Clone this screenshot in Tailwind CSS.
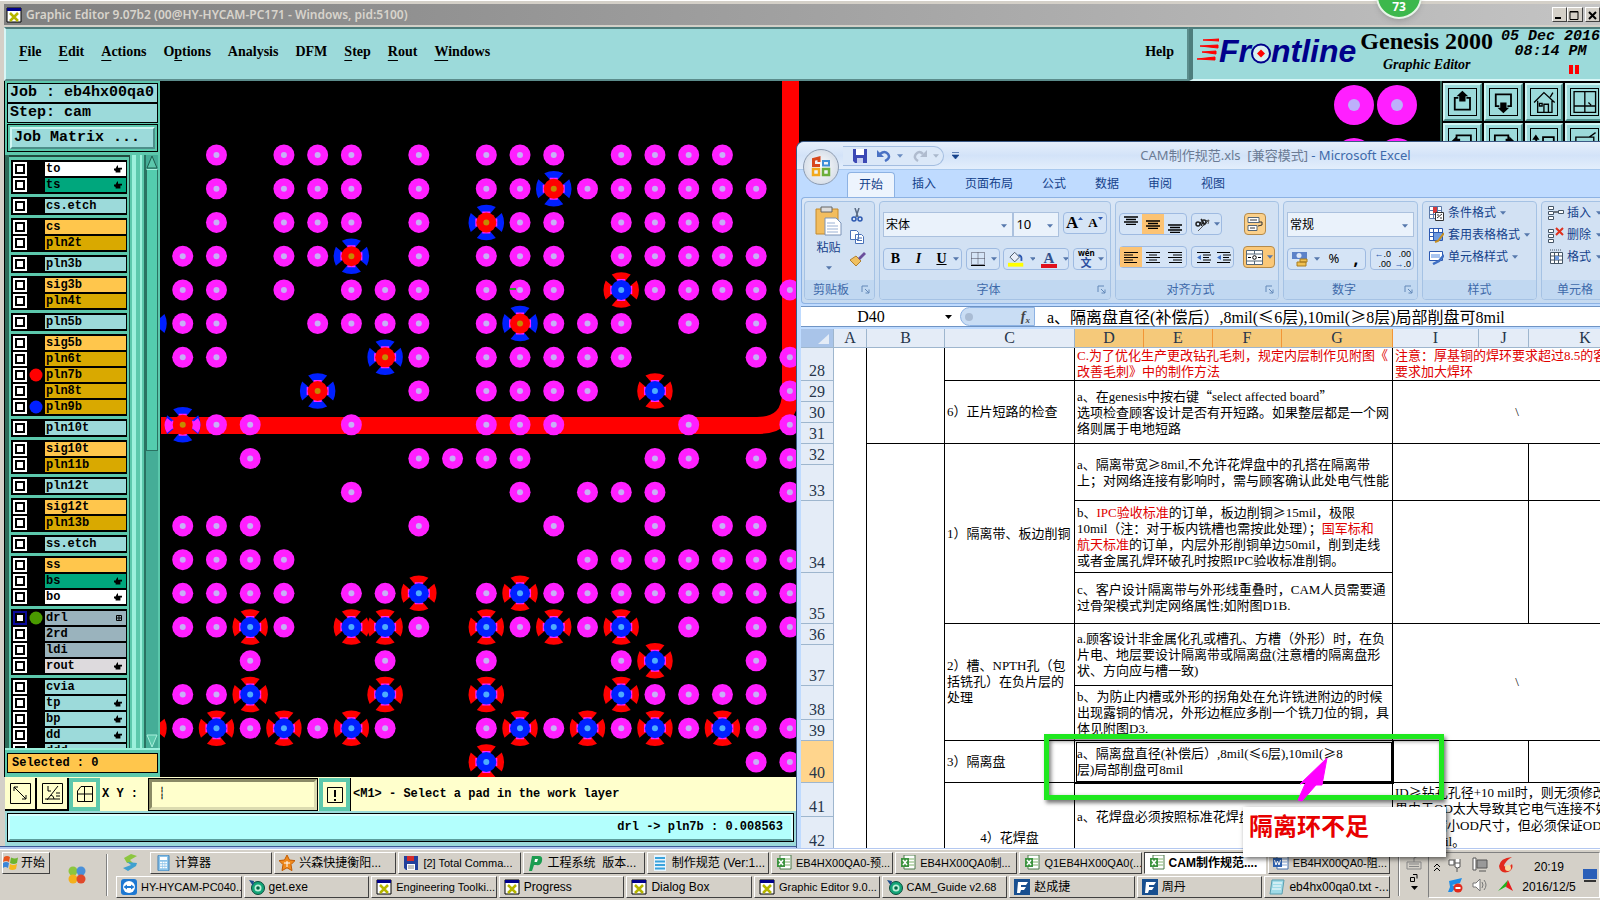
<!DOCTYPE html>
<html lang="zh-CN">
  <head>
    <meta charset="UTF-8" />
    <meta name="viewport" content="width=device-width, initial-scale=1.0" />
    <title>Graphic Editor 9.07b2</title>
    <script src="https://cdn.jsdelivr.net/npm/@tailwindcss/browser@4"></script>
  </head>
  <body
    class="h-screen flex flex-col overflow-hidden relative bg-[#d4d0c8] text-black text-xs font-['Liberation_Sans','Noto_Sans_CJK_SC',sans-serif]"
  >
    <!-- shared icons -->
    <svg class="hidden">
      <symbol id="dn" viewBox="0 0 7 4"><path d="M0 0h7L3.500 4z" fill="currentColor" /></symbol>
      <symbol id="hand" viewBox="0 0 10 9"><path d="M4 0l1 0 0 3 5 0 0 2-2 0 0 4-6 0 0-2-2-1 0-2 2 0z" fill="#000" /></symbol>
      <symbol id="gridmark" viewBox="0 0 6 6"><path d="M.5.5h5v5h-5zM3 0v6M0 3h6" fill="none" stroke="#000" /></symbol>
      <symbol id="launcher" viewBox="0 0 9 9"><path d="M1 7V1h6M4 4l4 4M8 4.500V8H4.500" fill="none" stroke="#6288b8" /></symbol>
      <symbol id="xwin" viewBox="0 0 16 16">
        <path d="M1 1h14v14H1z" fill="#fff" stroke="#000" />
        <path d="M1 1h14v3H1z" fill="#00008b" />
        <path d="M4 6l8 8M12 6l-8 8" stroke="#b5b500" stroke-width="2.500" />
      </symbol>
      <symbol id="calc" viewBox="0 0 16 16">
        <rect x="3" y="0" width="11" height="16" rx="1" fill="#8cc4ea" stroke="#3c7fb5" />
        <path d="M5 2h7v3H5z" fill="#fff" />
        <path d="M5 7.500h7M5 10h7M5 12.500h7" stroke="#fff" stroke-width="1.500" stroke-dasharray="2 .6" />
      </symbol>
      <symbol id="star" viewBox="0 0 16 16">
        <path d="M8 0l2.500 5 5.500.6-4 4 1 6-5-2.800L3 15.600l1-6-4-4L5.500 5z" fill="#f08a1c" stroke="#c25b00" />
        <path d="M5 8h6M8 6v6" stroke="#fff" />
      </symbol>
      <symbol id="disk" viewBox="0 0 16 16">
        <path d="M1 1h14v14H3l-2-2z" fill="#22409c" />
        <path d="M4 1h7v5H4z" fill="#d52b2b" />
        <path d="M4 9h8v6H4z" fill="#fff" />
        <path d="M5 11h6M5 13h6" stroke="#888" />
      </symbol>
      <symbol id="pee" viewBox="0 0 16 16">
        <path d="M4 1h7q4 0 3 5t-6 4H6l-2 6H1z" fill="#1c9c50" />
        <path d="M7 4h3l-1 3H6.500z" fill="#fff" />
      </symbol>
      <symbol id="doc" viewBox="0 0 16 16">
        <path d="M2 0h12v16H2z" fill="#e8f4fc" />
        <path d="M3 3h10M3 6.500h10M3 10h10M3 13.500h10" stroke="#3aa3dc" stroke-width="2" />
      </symbol>
      <symbol id="xls" viewBox="0 0 16 16">
        <path d="M4 0h11v14H4z" fill="#fff" stroke="#4d7a4a" />
        <path d="M8 4h6M8 7h6M8 10h6" stroke="#7fb26a" />
        <path d="M1 3h8v9H1z" fill="#3d9440" />
        <path d="M3 5l4 5M7 5l-4 5" stroke="#fff" stroke-width="1.500" />
      </symbol>
      <symbol id="word" viewBox="0 0 16 16">
        <path d="M4 0h11v14H4z" fill="#fff" stroke="#456fa8" />
        <path d="M8 4h6M8 7h6M8 10h6" stroke="#86a8d8" />
        <path d="M0 3h9v9H0z" fill="#2f61ae" />
        <path d="M1.500 5l1.500 5 1.500-4L6 10l1.500-5" stroke="#fff" fill="none" />
      </symbol>
      <symbol id="viewer" viewBox="0 0 16 16">
        <rect width="16" height="16" rx="3" fill="#1d78d2" />
        <circle cx="8" cy="8" r="6" fill="#fff" />
        <path d="M2.500 8l3.500-2.500v1.500h4V5.500L13.500 8 10 10.500V9H6v1.500z" fill="#1d78d2" />
      </symbol>
      <symbol id="eye" viewBox="0 0 16 16">
        <circle cx="9" cy="9" r="6.500" fill="#15a578" stroke="#0a4d3b" />
        <circle cx="9" cy="9" r="3.500" fill="#bdf0d8" />
        <circle cx="9" cy="9" r="1.800" fill="#064" />
        <path d="M0 1l5 1-1 5z" fill="#1b4e8c" />
      </symbol>
      <symbol id="feiq" viewBox="0 0 16 16">
        <path d="M0 0h16v16H0z" fill="#184f8f" />
        <path d="M4 3h10l-2 3H7v2h5l-2 3H7l-1 3H3z" fill="#fff" />
      </symbol>
      <symbol id="note" viewBox="0 0 16 16">
        <path d="M3 1h12l-2 14H1z" fill="#9fdbe8" stroke="#5a9fb0" />
        <path d="M4 4h9M4 7h8M3 10h9" stroke="#fff" />
      </symbol>
      <symbol id="al-l" viewBox="0 0 14 11"><path d="M0 .5h14M0 3h9M0 5.500h14M0 8h9M0 10.500h13" stroke="#000" stroke-width="1.200" /></symbol>
      <symbol id="al-c" viewBox="0 0 14 11"><path d="M0 .5h14M3 3h8M0 5.500h14M3 8h8M0 10.500h14" stroke="#000" stroke-width="1.200" /></symbol>
      <symbol id="al-r" viewBox="0 0 14 11"><path d="M0 .5h14M5 3h9M0 5.500h14M5 8h9M1 10.500h13" stroke="#000" stroke-width="1.200" /></symbol>
      <symbol id="al-v" viewBox="0 0 14 9"><path d="M0 1h14M2 3.500h10M0 6h14M2 8.500h10" stroke="#000" stroke-width="1.300" /></symbol>
      <symbol id="indent" viewBox="0 0 15 11">
        <path d="M1 .5h13M7 3h8M7 5.500h6M7 8h8M1 10.500h13" stroke="#000" stroke-width="1.200" />
        <path d="M5 3v5L1 5.500z" fill="#3f6fc4" />
      </symbol>
    </svg>

    <!-- Genesis window -->
    <div class="flex-1 min-h-0 flex flex-col pl-1 border-t border-white">
      <header
        class="h-[23px] shrink-0 mt-[3px] pl-0.5 flex items-center gap-1 bg-linear-to-r from-[#808080] to-[#c4c4c4] border-b-2 border-[#d4d0c8]"
      >
        <svg class="size-4"><use href="#xwin" /></svg>
        <span class="flex-1 font-semibold text-[12px] font-['Noto_Sans'] text-[#d8d4cc]"
          >Graphic Editor 9.07b2 (00@HY-HYCAM-PC171 - Windows, pid:5100)</span
        >
        <div class="flex w-[48px] h-[15px]">
          <button aria-label="Minimize" class="w-4 bg-[#d4d0c8] border border-t-white border-l-white border-[#404040]">
            <svg class="size-3"><path d="M2 9h6" stroke="#000" stroke-width="2" /></svg>
          </button>
          <button aria-label="Maximize" class="w-4 mr-0.5 bg-[#d4d0c8] border border-t-white border-l-white border-[#404040]">
            <svg class="size-3"><path d="M2 2.500h8v8H2zM2 3h8" fill="none" stroke="#000" /></svg>
          </button>
          <button aria-label="Close" class="w-4 bg-[#d4d0c8] border border-t-white border-l-white border-[#404040]">
            <svg class="size-3"><path d="M3 3l7 7M10 3l-7 7" stroke="#000" stroke-width="2" /></svg>
          </button>
        </div>
      </header>

      <div class="h-[54px] shrink-0 flex bg-[#9cdada] font-bold">
        <nav
          class="flex-1 flex items-center gap-[17px] pl-[13px] pr-[13px] pb-1 text-[14px] font-['Liberation_Serif'] border-2 border-t-[#4d7d7c] border-l-[#d8f6f6] border-[#5c8d8c]"
        >
          <a href="#"><u class="underline-offset-4">F</u>ile</a>
          <a href="#"><u class="underline-offset-4">E</u>dit</a>
          <a href="#"><u class="underline-offset-4">A</u>ctions</a>
          <a href="#">O<u class="underline-offset-4">p</u>tions</a>
          <a href="#">Analysis</a>
          <a href="#">DFM</a>
          <a href="#"><u class="underline-offset-4">S</u>tep</a>
          <a href="#"><u class="underline-offset-4">R</u>out</a>
          <a href="#"><u class="underline-offset-4">W</u>indows</a>
          <a href="#" class="ml-auto">Help</a>
        </nav>
        <div class="w-[411px] flex items-start overflow-hidden whitespace-nowrap border-t-2 border-b-2 border-l-4 border-t-[#4d7d7c] border-b-[#d8f6f6] border-l-[#4d7d7c]">
          <div class="flex items-baseline pt-0.5 pl-1 italic text-[32px] leading-10 text-[#00008b]">
            <svg class="w-[22px] h-6" viewBox="0 0 22 24">
              <path d="M6 2l16-1v2zM3 8l18-1v3zM5 14l14-1v3zM0 21l18-2v3z" fill="#f00" stroke="#f00" />
            </svg>
            Fr<svg class="w-5 h-[21px] translate-y-0.5" viewBox="0 0 20 21"
              ><circle cx="10" cy="10.500" r="9" fill="#d8f0f0" stroke="#00008b" stroke-width="2" /><path d="M10 6.500l4 4-4 4-4-4z" fill="#f00" /></svg
            >ntline
          </div>
          <div class="pl-1 text-center font-['Liberation_Serif']">
            <p class="text-[24px] leading-6">Genesis 2000</p>
            <p class="text-[14px] leading-6 italic">Graphic Editor</p>
          </div>
          <div class="pl-2 text-center italic text-[15px] leading-[15px] font-['Liberation_Mono']">
            <p>05 Dec 2016</p>
            <p>08:14 PM</p>
            <svg class="w-[10px] h-[9px] ml-[68px] mt-1.5"><path d="M0 0h4v9H0zM6 0h4v9H6z" fill="#f00" /></svg>
          </div>
        </div>
      </div>

      <div class="flex-1 min-h-0 flex">
        <!-- layers -->
        <aside class="w-[156px] shrink-0 flex flex-col bg-[#5cc8ac] border-l border-black font-bold font-['Liberation_Mono']">
          <div class="mx-0.5 mt-0.5 text-[15px] leading-[17px] whitespace-nowrap">
            <p class="h-5 pl-0.5 bg-[#9cdada] border border-black">Job : eb4hx00qa0</p>
            <p class="h-5 pl-0.5 bg-[#9cdada] border border-black">Step: cam</p>
          </div>
          <div class="mx-0.5 mt-px p-0.5 border border-black bg-[#5cc8ac]">
            <button class="block w-full h-[22px] pl-0.5 text-left text-[15px] leading-4 bg-[#9cdada] border-2 border-t-[#d0f5f2] border-l-[#d0f5f2] border-[#4d8f8a]">
              Job Matrix ...
            </button>
          </div>
          <div class="flex-1 min-h-0 mt-[3px] flex border-b-2 border-[#9cf0dc]">
            <div class="w-1 bg-[#2f6b5a]"></div>
            <div id="layers" class="w-[121px] pt-[3px] px-0.5 flex flex-col gap-[3px] overflow-hidden border-t-2 border-r border-[#204a3f]"></div>
            <div class="flex-1 border-l-4 border-r-2 border-[#9cf0dc] mx-0.5"></div>
            <div class="w-[14px] mr-0.5 flex flex-col bg-[#45ad97] border-l-2 border-[#2a7262]">
              <svg class="h-[14px] w-3" viewBox="0 0 12 14"><path d="M6 1l5 12H1z" fill="#5cc8ac" stroke="#205c4e" /></svg>
              <div class="h-[282px] bg-[#54ccae] border border-t-[#a8f0dc] border-[#2a7262]"></div>
              <svg class="h-[14px] w-3 mt-auto" viewBox="0 0 12 14"><path d="M6 13L1 1h10z" fill="#5cc8ac" stroke="#a8f0dc" /></svg>
            </div>
          </div>
          <p class="mx-0.5 mt-[3px] mb-1 h-5 pl-1 leading-[18px] bg-[#ffc64c] border border-black">Selected : 0</p>
        </aside>

        <!-- work canvas -->
        <main class="flex-1 relative bg-black overflow-hidden">
          <svg class="block w-full h-full">
            <defs>
              <g id="wings">
                <g id="wing2"><path d="M-9.500-15.500Q0-20 9.500-15.500L4-9H-4zM-9.500 15.500Q0 20 9.500 15.500L4 9H-4z" /></g>
                <use href="#wing2" transform="rotate(90)" />
              </g>
              <g id="p">
                <circle r="10.500" fill="#ff1fff" />
                <circle r="3" fill="#c8aef6" />
              </g>
              <g id="b">
                <use href="#wings" fill="#0020ff" />
                <path d="M-4-10h8M-4 10h8M-10-4v8M10-4v8" stroke="#ff1fff" stroke-width="2" />
                <circle r="10" fill="#f00" />
                <circle r="3" fill="#c58a00" />
              </g>
              <g id="r">
                <use href="#wings" fill="#f00" />
                <path d="M-4-10h8M-4 10h8M-10-4v8M10-4v8" stroke="#ff1fff" stroke-width="2" />
                <circle r="10" fill="#0020ff" />
                <circle r="3" fill="#4cacff" />
              </g>
            </defs>
            <g transform="translate(-160 -81)">
              <path d="M161 425.500H757Q790.500 425.500 790.500 392V81" fill="none" stroke="#f00" stroke-width="17" />
              <g id="pads"></g>
              <path d="M510 289h6" stroke="#2a2" stroke-width="2" />
              <!-- spokes of this pad lie on the track -->
              <path d="M167 418q-5 7 0 15l5-4v-7zM198 418q5 7 0 15l-5-4v-7z" fill="#ff1fff" />
              <g fill="#ff1fff">
                <circle cx="1354" cy="105" r="20" /><circle cx="1397" cy="105" r="20" />
                <circle cx="1354" cy="158" r="20" /><circle cx="1397" cy="158" r="20" />
              </g>
              <g fill="#bdb0fb">
                <circle cx="1354" cy="105" r="6" /><circle cx="1397" cy="105" r="6" />
              </g>
            </g>
          </svg>
        </main>

        <!-- view tools -->
        <div class="w-[160px] shrink-0 overflow-hidden border-l-2 border-[#2f5f50] bg-black">
          <div id="tools" class="w-[162px] pt-0.5 pl-px grid grid-cols-4 gap-0.5"></div>
        </div>
      </div>

      <!-- command line -->
      <form class="h-[34px] shrink-0 flex bg-[#ffffcc] border-t border-[#ffffcc] font-bold font-['Liberation_Mono'] ml-px">
        <button type="button" aria-label="Snap" class="w-8 flex items-center justify-center border-r-2 border-b-2 border-black">
          <svg class="size-[23px]"><path d="M1.500 1.500h20v20h-20zM5 9V5h4M5 5l12 12M17 13v4h-4" fill="none" stroke="#000" /></svg>
        </button>
        <button type="button" aria-label="Angle" class="w-8 flex items-center justify-center border-r-2 border-b-2 border-black">
          <svg class="size-[23px]"><path d="M1.500 1.500h20v20h-20zM4 17h15M6 18L17 4M7 4v5h3M10 13q3 1 3 4M15 11h4M15 14h4" fill="none" stroke="#000" /></svg>
        </button>
        <button type="button" aria-label="Grid" class="w-[31px] flex items-center justify-center border-4 border-[#5cc8ac]">
          <svg class="size-[19px]"><path d="M6 1.500h11.500v15h-15V6zM2 9h16M9.500 2v15" fill="none" stroke="#000" /></svg>
        </button>
        <label for="xy" class="w-12 pl-0.5 leading-8">X Y :</label>
        <input
          id="xy"
          placeholder="┊"
          class="w-[168px] m-px pl-1 bg-[#ffffcc] placeholder:text-black border-3 border-t-[#8a8a66] border-l-[#8a8a66] border-[#dcdcb0] outline-1 outline-black"
        />
        <button type="button" aria-label="Alert" class="w-[31px] ml-px flex items-center justify-center border-4 border-[#5cc8ac]">
          <svg class="size-[18px]"><path d="M1.500 1.500h15v15h-15z" fill="none" stroke="#000" /><path d="M9 4v7M9 13v2" stroke="#000" stroke-width="2" /></svg>
        </button>
        <p class="pl-0.5 border-l border-black leading-8">&lt;M1&gt; - Select a pad in the work layer</p>
      </form>
      <div class="h-[35px] shrink-0 p-[3px] bg-[#9cdada] ml-px">
        <p class="h-[27px] w-[785px] pr-2 text-right leading-[22px] font-bold font-['Liberation_Mono'] bg-[#b3fffd] border-2 border-[#d8ffff] border-b-[#5c9d9c] outline-1 outline-black">
          drl -&gt; pln7b : 0.008563
        </p>
      </div>
      <div class="h-[3px] shrink-0 bg-[#b4c8f0] border-t border-[#3c5a96] -ml-1"></div>
    </div>

    <!-- taskbar -->
    <footer class="h-[51px] shrink-0 flex bg-[#d4d0c8] border-t border-white py-0.5 whitespace-nowrap">
      <button class="ml-0.5 w-12 h-[22px] flex items-center gap-0.5 border border-t-white border-l-white border-[#404040]">
        <svg class="size-4 shrink-0" viewBox="0 0 16 16">
          <path d="M1 2q3-2 6 0L6 7q-3-2-6 0z" fill="#e8541c" /><path d="M8 2.500q4 2 7 0L14 8q-3 2-7 0z" fill="#6cb52d" />
          <path d="M0 8q3-2 6 0l-1 5q-3-2-5 0z" fill="#3a86d8" /><path d="M7 9q3 2 7 0l-1 5q-4 2-7 0z" fill="#f5b81c" />
        </svg>
        开始
      </button>
      <svg class="size-[18px] ml-[18px] mt-3.5" viewBox="0 0 18 18">
        <circle cx="5" cy="5" r="4.500" fill="#8cc63f" /><circle cx="13" cy="5" r="4.500" fill="#4a90d9" />
        <circle cx="5" cy="13" r="4.500" fill="#f3b01c" /><circle cx="13" cy="13" r="4.500" fill="#e0492c" />
      </svg>
      <div class="w-0.5 my-0.5 ml-5 border-l border-[#808080] bg-white"></div>
      <nav class="flex-1 ml-2 flex flex-col gap-0.5 min-w-0">
        <div class="flex gap-3">
          <svg class="w-4 h-[18px] mt-0.5 ml-1.5 shrink-0" viewBox="0 0 16 18">
            <path d="M2 4l7-4 6 2-7 4 3 3H5z" fill="#8cc63f" /><path d="M5 8l10 1-1 3-8 5-5-3 8-3z" fill="#3fa0d0" />
          </svg>
          <div id="tasks1" class="flex-1 min-w-0 grid grid-cols-10 gap-0.5"></div>
        </div>
        <div id="tasks2" class="grid grid-cols-10 gap-0.5"></div>
      </nav>
      <div class="w-0.5 my-0.5 ml-2 border-l border-[#808080] bg-white"></div>
      <div class="w-[28px] pt-0.5 flex flex-col items-center gap-1">
        <svg class="w-4 h-4" viewBox="0 0 16 16"><path d="M1 8h14v7H1zM3 10h10M3 12.500h10M8 8V4l6-3" fill="none" stroke="#888" /></svg>
        <svg class="w-2 h-2"><path d="M3 .5h4v4M.5 3.500h4v4h-4z" fill="none" stroke="#000" /></svg>
        <svg class="w-[7px] h-1"><use href="#dn" /></svg>
      </div>
      <div class="w-[172px] flex gap-1.5 border border-t-[#808080] border-l-[#808080] border-white pl-1">
        <svg class="w-2 h-2 mt-2.5 shrink-0"><path d="M1 4l3-3 3 3M1 8l3-3 3 3" fill="none" stroke="#000" /></svg>
        <div class="grid grid-cols-3 gap-x-2 gap-y-1 py-1 w-[68px]">
          <svg class="size-4" viewBox="0 0 16 16"><path d="M2 3h5v5H2zM8 2v4h5V2M8 6v4q2 2 5 0V6M10 11v4" fill="#fff" stroke="#555" /></svg>
          <svg class="size-4" viewBox="0 0 16 16"><path d="M5 3h10v8H5zM7 14h7" fill="#999" stroke="#555" /><path d="M1 1h3v12H1z" fill="#fff" stroke="#555" /></svg>
          <svg class="size-4" viewBox="0 0 16 16"><path d="M14 0Q2 1 1 9q1 8 9 6 6-3 4-8l-4 4-4-2q1-5 8-9z" fill="#e22a1c" /><circle cx="10" cy="11" r="3" fill="#f7d9a0" /></svg>
          <svg class="size-4" viewBox="0 0 16 16"><path d="M2 4L15 1l-2 5-8 2 4 2-4 5H1l2-5z" fill="#1c8ce8" /><circle cx="11" cy="11" r="4.500" fill="#e22a1c" /><path d="M8.500 11h5" stroke="#fff" stroke-width="2" /></svg>
          <svg class="size-4" viewBox="0 0 16 16"><path d="M1 6h3l4-4v12l-4-4H1z" fill="#fff" stroke="#777" /><path d="M10 5q2 3 0 6M12 3q4 5 0 10" fill="none" stroke="#777" /></svg>
          <svg class="size-4" viewBox="0 0 16 16"><path d="M0 14L10 3 9 9z" fill="#1fb41f" /><path d="M10 3l5 11-7-4z" fill="#e81c1c" /></svg>
        </div>
        <div class="w-[56px] text-center leading-5 pt-1">
          <p>20:19</p>
          <p>2016/12/5</p>
        </div>
        <svg class="w-3.5 h-3.5 mt-4" viewBox="0 0 14 14"><path d="M0 0h14v10H0z" fill="#2b5fb8" /><path d="M1 12h12" stroke="#333" stroke-width="2" /></svg>
      </div>
    </footer>

    <!-- Excel window -->
    <section
      class="absolute left-[796px] right-0 top-[141px] bottom-[52px] flex flex-col overflow-hidden rounded-tl-lg bg-[#bfdbff] border-l border-t border-[#3c5a86] text-[#15428b] font-['Noto_Sans','Noto_Sans_CJK_SC',sans-serif]"
    >
      <button aria-label="Office" class="absolute left-1.5 top-[7px] size-9 rounded-full border border-[#8c9bb0] bg-radial from-white to-[#c9d3e0] flex items-center justify-center">
        <svg class="size-[22px]" viewBox="0 0 22 22" fill="none" stroke-width="3">
          <path d="M10 9.500H3.500V3.500L9 2v4" stroke="#d8481c" /><path d="M13 9.500h6V5h-6z" stroke="#3f8fd8" stroke-width="2" />
          <path d="M3 13h6v6H3z" stroke="#f2a91c" stroke-width="2.500" /><path d="M13 13h6v6h-6z" stroke="#6cae3a" stroke-width="2.500" />
        </svg>
      </button>
      <div class="h-7 shrink-0 pl-[46px] flex items-center bg-linear-to-b from-[#e6effb] via-[#d3e3f8] to-[#e3eefc] border-b border-[#a9c9ee]">
        <div class="w-[101px] h-5 pl-2.5 flex items-center gap-1.5 rounded-r-full border border-l-0 border-[#a3bde0] bg-[#dbe8f8]">
          <svg class="size-3.5 shrink-0" viewBox="0 0 14 14"><path d="M0 0h14v14H2l-2-2z" fill="#3c49b4" /><path d="M3 0h8v6H3z" fill="#fff" /><path d="M4 9h6v5H4z" fill="#c8d0f0" /></svg>
          <svg class="w-3.5 h-3 ml-1 shrink-0" viewBox="0 0 14 12"><path d="M3 4q5-4 8 0t-3 7" fill="none" stroke="#4a72c4" stroke-width="2.500" /><path d="M0 0v7h7z" fill="#4a72c4" /></svg>
          <svg class="w-1.5 h-1 shrink-0 text-[#6a8cc0]"><use href="#dn" /></svg>
          <svg class="w-3.5 h-3 ml-1 shrink-0" viewBox="0 0 14 12"><path d="M10 4Q6 0 3 4t2 7" fill="none" stroke="#b0bccf" stroke-width="2.500" /><path d="M14 0v7H7z" fill="#b0bccf" /></svg>
          <svg class="w-1.5 h-1 shrink-0 text-[#aab8cc]"><use href="#dn" /></svg>
        </div>
        <svg class="w-[7px] h-[7px] ml-2" viewBox="0 0 7 7"><path d="M0 .5h7M0 3h7L3.500 7z" fill="#15428b" stroke="#15428b" stroke-width=".6" /></svg>
        <h1 class="flex-1 pr-2 text-center text-[13px] whitespace-pre text-[#3e6aaa]"><span class="text-[#6b7b94]">CAM制作规范.xls  [兼容模式]</span> - Microsoft Excel</h1>
      </div>
      <nav class="h-[27px] shrink-0 pl-[50px] pt-0.5 flex gap-[5px] text-xs leading-6">
        <a href="#" class="px-[11px] rounded-t bg-[#edf4fd] border border-b-0 border-[#8db2e3]">开始</a>
        <a href="#" class="px-3">插入</a>
        <a href="#" class="px-3">页面布局</a>
        <a href="#" class="px-3">公式</a>
        <a href="#" class="px-3">数据</a>
        <a href="#" class="px-3">审阅</a>
        <a href="#" class="px-3">视图</a>
      </nav>

      <div class="h-[107px] shrink-0 ml-1 py-[3px] pl-0.5 flex gap-1 rounded-l bg-linear-to-b from-[#dbe7f6] to-[#c6daf0] border border-r-0 border-[#8db2e3] text-xs">
        <div class="w-[71px] shrink-0 flex flex-col rounded border border-[#a5c2e4] overflow-hidden bg-[#d2e1f3]">
          <div class="flex-1 flex justify-between pl-2.5 pr-2 pt-1">
            <button class="flex flex-col items-center">
              <svg class="w-[27px] h-[30px]" viewBox="0 0 27 30">
                <path d="M1 3h22v25H1z" fill="#f2bd5e" stroke="#c48a2c" /><path d="M6 1h11v5H6z" fill="#ddd" stroke="#666" />
                <path d="M10 12h11l5 5v12H10z" fill="#fff" stroke="#7a93b8" /><path d="M12 17h8M12 20h11M12 23h11M12 26h11" stroke="#9ab1d4" />
              </svg>
              <span class="leading-6">粘贴</span>
              <svg class="w-1.5 h-1 mt-1.5 text-[#5678ac]"><use href="#dn" /></svg>
            </button>
            <div class="flex flex-col gap-2 pt-0.5">
              <svg class="w-3.5 h-3.5" viewBox="0 0 14 14"><path d="M5 0l3 9M9 0L6 9" stroke="#5a6b84" stroke-width="1.500" /><circle cx="4" cy="11" r="2" fill="none" stroke="#2c58b0" stroke-width="1.500" /><circle cx="10" cy="11" r="2" fill="none" stroke="#2c58b0" stroke-width="1.500" /></svg>
              <svg class="w-3.5 h-3.5" viewBox="0 0 14 14"><path d="M.5.5h6l2 2v7h-8zM5.500 4.500h6l2 2v7h-8z" fill="#fff" stroke="#4a72b8" /><path d="M7 8h5M7 10.500h5" stroke="#4a72b8" /></svg>
              <svg class="w-4 h-3.5" viewBox="0 0 16 14"><path d="M0 8l6-4 5 5-5 5z" fill="#f0c060" stroke="#b08030" /><path d="M8 6l6-6 2 2-6 6z" fill="#6a4e9c" /></svg>
            </div>
          </div>
          <div class="h-[19px] pl-2 pr-1 flex justify-between items-center bg-[#c1d8f1] text-[#3e6aaa]"><span>剪贴板</span><svg class="size-[9px]"><use href="#launcher" /></svg></div>
        </div>

        <div class="w-[232px] shrink-0 flex flex-col rounded border border-[#a5c2e4] overflow-hidden bg-[#d2e1f3]">
          <div class="flex-1 px-[3px] pt-[10px] flex flex-col gap-[11px]">
            <div class="flex text-[#5678ac]">
              <select aria-label="字体" class="appearance-none w-[131px] h-[25px] pl-0.5 bg-[#eaf2fb] border border-[#abc1de] text-black"><option>宋体</option></select>
              <svg class="w-1.5 h-1 -ml-3 mr-1.5 mt-3 shrink-0"><use href="#dn" /></svg>
              <select aria-label="字号" class="appearance-none w-[46px] h-[25px] pl-0.5 bg-[#eaf2fb] border border-[#abc1de] text-black text-[13px]"><option>10</option></select>
              <svg class="w-1.5 h-1 -ml-3 mr-2.5 mt-3 shrink-0"><use href="#dn" /></svg>
              <div class="flex h-[22px] w-11 rounded-sm border border-[#9ebae1] bg-[#d5e4f6] font-bold font-['Liberation_Serif'] text-black leading-5">
                <button class="flex-1 flex justify-center text-[17px]">A<svg class="w-[5px] h-[3px] mt-1" viewBox="0 0 5 3"><path d="M0 3h5L2.500 0z" fill="#2c58b0" /></svg></button>
                <button class="flex-1 flex justify-center text-[13px]">A<svg class="w-[5px] h-[3px] mt-1" viewBox="0 0 5 3"><path d="M0 0h5L2.500 3z" fill="#2c58b0" /></svg></button>
              </div>
            </div>
            <div class="flex justify-between h-[22px] text-[#5678ac]">
              <div class="flex w-[79px] items-center rounded-sm border border-[#9ebae1] bg-[#d5e4f6] text-sm font-bold font-['Liberation_Serif']">
                <button class="w-[23px] text-black">B</button><button class="w-[23px] italic text-black">I</button><button class="w-[23px] underline text-black">U</button>
                <svg class="w-1.5 h-1"><use href="#dn" /></svg>
              </div>
              <div class="flex w-[34px] items-center gap-1.5 pl-1 rounded-sm border border-[#9ebae1] bg-[#d5e4f6]">
                <svg class="w-[14px] h-[14px]"><path d="M.5.500h13v12H.5zM7 .5v12M.5 6.500h13" fill="none" stroke="#445" stroke-dasharray="1 1" /><path d="M0 13.500h14" stroke="#000" /></svg>
                <svg class="w-1.5 h-1"><use href="#dn" /></svg>
              </div>
              <div class="flex w-[66px] items-center gap-1.5 pl-1 rounded-sm border border-[#9ebae1] bg-[#d5e4f6]">
                <svg class="w-4 h-4" viewBox="0 0 16 16"><path d="M2 6l5-5 5 5-5 5z" fill="#e8eef8" stroke="#456" /><path d="M11 4q4 0 3 6" fill="none" stroke="#2c58b0" stroke-width="2" /><path d="M0 12h16v4H0z" fill="#ff0" /></svg>
                <svg class="w-1.5 h-1"><use href="#dn" /></svg>
                <button class="w-4 h-[17px] leading-[14px] text-[15px] font-bold font-['Liberation_Serif'] text-[#33518c] border-b-4 border-[#e0101c]">A</button>
                <svg class="w-1.5 h-1"><use href="#dn" /></svg>
              </div>
              <div class="flex w-[34px] items-center gap-1 pl-1 rounded-sm border border-[#9ebae1] bg-[#d5e4f6]">
                <button class="w-4 text-[8px] leading-[8px] font-bold text-black">wén<span class="block text-[11px] leading-[12px] text-[#2c4fa0]">文</span></button>
                <svg class="w-1.5 h-1"><use href="#dn" /></svg>
              </div>
            </div>
          </div>
          <div class="h-[19px] pr-1 flex items-center bg-[#c1d8f1] text-[#3e6aaa]"><span class="flex-1 text-center">字体</span><svg class="size-[9px]"><use href="#launcher" /></svg></div>
        </div>

        <div class="w-[164px] shrink-0 flex flex-col rounded border border-[#a5c2e4] overflow-hidden bg-[#d2e1f3]">
          <div class="flex-1 px-[3px] pt-[11px] flex flex-col gap-[11px] text-[#5678ac]">
            <div class="flex h-[22px] gap-1">
              <div class="flex w-[68px] rounded-sm border border-[#9ebae1] bg-[#d5e4f6]">
                <button aria-label="顶端对齐" class="flex-1 pl-1"><svg class="w-3.5 h-[9px] mb-2"><use href="#al-v" /></svg></button>
                <button aria-label="垂直居中" class="flex-1 pl-1 bg-[#fcc373]"><svg class="w-3.5 h-[9px]"><use href="#al-v" /></svg></button>
                <button aria-label="底端对齐" class="flex-1 pl-1"><svg class="w-3.5 h-[9px] mt-2"><use href="#al-v" /></svg></button>
              </div>
              <button aria-label="方向" class="flex w-[31px] items-center gap-1 pl-0.5 rounded-sm border border-[#9ebae1] bg-[#d5e4f6]">
                <svg class="size-4" viewBox="0 0 16 16"><path d="M4 15L15 4M15 4l-4 1M15 4l-1 4" stroke="#555" fill="none" /><circle cx="4" cy="8" r="2" fill="none" stroke="#222" stroke-width="1.500" /><path d="M6 6l2 4M7 3l4 6" stroke="#222" stroke-width="1.500" /><circle cx="10" cy="6" r="2" fill="none" stroke="#222" stroke-width="1.500" /></svg>
                <svg class="w-1.5 h-1"><use href="#dn" /></svg>
              </button>
              <button aria-label="自动换行" class="ml-[18px] w-[22px] flex items-center justify-center rounded-sm border border-[#b58a4a] bg-[#fbd08a]">
                <svg class="size-4" viewBox="0 0 16 16"><path d="M1 1.500h11v5H1zM1 9.500h9v5H1z" fill="#fff" stroke="#567" /><path d="M3 4h7M3 12h5M12 6h3v3l-4 1" fill="none" stroke="#333" /></svg>
              </button>
            </div>
            <div class="flex h-[22px] gap-1">
              <div class="flex w-[68px] rounded-sm border border-[#9ebae1] bg-[#d5e4f6]">
                <button aria-label="左对齐" class="flex-1 pl-1 bg-[#fcc373]"><svg class="w-3.5 h-[11px]"><use href="#al-l" /></svg></button>
                <button aria-label="居中" class="flex-1 pl-1"><svg class="w-3.5 h-[11px]"><use href="#al-c" /></svg></button>
                <button aria-label="右对齐" class="flex-1 pl-1"><svg class="w-3.5 h-[11px]"><use href="#al-r" /></svg></button>
              </div>
              <div class="flex w-11 rounded-sm border border-[#9ebae1] bg-[#d5e4f6]">
                <button aria-label="减少缩进" class="flex-1 pl-1"><svg class="w-[15px] h-[11px]"><use href="#indent" /></svg></button>
                <button aria-label="增加缩进" class="flex-1 pl-1"><svg class="w-[15px] h-[11px]"><use href="#indent" /></svg></button>
              </div>
              <button aria-label="合并后居中" class="ml-[5px] w-8 flex items-center gap-1 pl-0.5 rounded-sm border border-[#b58a4a] bg-[#fbc878]">
                <svg class="size-[17px]" viewBox="0 0 17 17"><path d="M.5 1.500h16v14H.5zM.5 5h16M.5 12h16M8.500 1.500V5M8.500 12v3.500" fill="#fff" stroke="#567" /><path d="M2 8.500h3M12 8.500h3" stroke="#000" /><circle cx="8.500" cy="8.500" r="1.800" fill="none" stroke="#000" /></svg>
                <svg class="w-1.5 h-1"><use href="#dn" /></svg>
              </button>
            </div>
          </div>
          <div class="h-[19px] pr-1 flex items-center bg-[#c1d8f1] text-[#3e6aaa]"><span class="flex-1 text-center">对齐方式</span><svg class="size-[9px]"><use href="#launcher" /></svg></div>
        </div>

        <div class="w-[135px] shrink-0 flex flex-col rounded border border-[#a5c2e4] overflow-hidden bg-[#d2e1f3]">
          <div class="flex-1 px-[3px] pt-[10px] flex flex-col gap-[11px] text-[#5678ac]">
            <div class="flex">
              <select aria-label="数字格式" class="appearance-none w-[127px] h-[25px] pl-0.5 bg-[#eaf2fb] border border-[#abc1de] text-black"><option>常规</option></select>
              <svg class="w-1.5 h-1 -ml-3 mt-3 shrink-0"><use href="#dn" /></svg>
            </div>
            <div class="flex h-[22px] gap-1">
              <div class="flex w-[79px] items-center gap-1.5 pl-1 rounded-sm border border-[#9ebae1] bg-[#d5e4f6]">
                <svg class="size-4" viewBox="0 0 16 16"><path d="M0 1h15v7H0z" fill="#5c82c8" /><circle cx="7" cy="4.500" r="2.500" fill="#dce6f8" /><path d="M5 11h9v4H5zM8 8h7v3H8z" fill="#f0c050" stroke="#a87c20" /></svg>
                <svg class="w-1.5 h-1"><use href="#dn" /></svg>
                <button class="w-4 text-[13px] text-black">%</button>
                <button class="w-4 text-[17px] leading-3 font-bold text-black">,</button>
              </div>
              <div class="flex w-11 rounded-sm border border-[#9ebae1] bg-[#d5e4f6] text-[9px] leading-[10px] text-black font-['Liberation_Sans']">
                <button class="flex-1 flex flex-col items-end"><span class="block"><i class="not-italic text-[#2c58b0]">←</i>.0</span><span class="block">.00</span></button>
                <button class="flex-1 flex flex-col items-end pr-0.5"><span class="block">.00</span><span class="block"><i class="not-italic text-[#2c58b0]">→</i>.0</span></button>
              </div>
            </div>
          </div>
          <div class="h-[19px] pr-1 flex items-center bg-[#c1d8f1] text-[#3e6aaa]"><span class="flex-1 text-center">数字</span><svg class="size-[9px]"><use href="#launcher" /></svg></div>
        </div>

        <div class="w-[115px] shrink-0 flex flex-col rounded border border-[#a5c2e4] overflow-hidden bg-[#d2e1f3]">
          <div class="flex-1 pl-1.5 leading-[22px]">
            <button class="flex items-center gap-1">
              <svg class="size-[15px]" viewBox="0 0 15 15"><path d="M.5.500h12v12H.5zM.5 4.500h12M.5 8.500h12M4.500.5v12M8.500.5v12" fill="#fff" stroke="#5a78a8" /><path d="M4 1h4v6H4z" fill="#d83a3a" /><path d="M6.500 6.500h8v8h-8z" fill="#fff" stroke="#333" /><path d="M8 12l5-4M8 9h2M11 12h2" stroke="#333" /></svg>
              条件格式 <svg class="w-1.5 h-1 text-[#5678ac]"><use href="#dn" /></svg>
            </button>
            <button class="flex items-center gap-1">
              <svg class="size-[15px]" viewBox="0 0 15 15"><path d="M.5.500h13v12H.5z" fill="#fff" stroke="#2c58b0" /><path d="M.5 4.500h13M.5 8.500h13M4.500.5v12M9.500.5v12" stroke="#2c58b0" /><path d="M5 5h8v7H5z" fill="#6f9be0" /><path d="M15 5l-6 8-3 1" stroke="#c89020" stroke-width="2" fill="none" /></svg>
              套用表格格式 <svg class="w-1.5 h-1 text-[#5678ac]"><use href="#dn" /></svg>
            </button>
            <button class="flex items-center gap-1">
              <svg class="size-[15px]" viewBox="0 0 15 15"><path d="M.5 1.500h13v9H.5z" fill="#fff" stroke="#2c58b0" /><path d="M2 4h9v4H2z" fill="#a8c4f0" /><path d="M15 5l-5 6-6 3" stroke="#3f6fc4" stroke-width="2.500" fill="none" /></svg>
              单元格样式 <svg class="w-1.5 h-1 text-[#5678ac]"><use href="#dn" /></svg>
            </button>
          </div>
          <div class="h-[19px] leading-[19px] text-center bg-[#c1d8f1] text-[#3e6aaa]">样式</div>
        </div>

        <div class="w-[72px] shrink-0 flex flex-col rounded-l border border-[#a5c2e4] overflow-hidden bg-[#d2e1f3]">
          <div class="flex-1 pl-1.5 leading-[22px] whitespace-nowrap">
            <button class="flex items-center gap-[3px]">
              <svg class="size-4 shrink-0" viewBox="0 0 16 16"><path d="M.5 1.500h5v3h-5zM.5 6.500h5v3h-5zM.5 11.500h5v3h-5zM10.500 5.500h5v3h-5z" fill="#fff" stroke="#456" /><path d="M6 7h4" stroke="#000" /></svg>
              插入 <svg class="w-1.5 h-1 ml-0.5 shrink-0 text-[#5678ac]"><use href="#dn" /></svg>
            </button>
            <button class="flex items-center gap-[3px]">
              <svg class="size-4 shrink-0" viewBox="0 0 16 16"><path d="M.5 2.500h5v3h-5zM.5 7.500h5v3h-5zM.5 12.500h5v3h-5z" fill="#fff" stroke="#456" /><path d="M8 1l7 7M15 1L8 8" stroke="#e0301c" stroke-width="2" /></svg>
              删除 <svg class="w-1.5 h-1 ml-0.5 shrink-0 text-[#5678ac]"><use href="#dn" /></svg>
            </button>
            <button class="flex items-center gap-[3px]">
              <svg class="size-4 shrink-0" viewBox="0 0 16 16"><path d="M2.500 3.500h12v11h-12zM2 7h13M2 11h13M6.500 3v12M10.500 3v12" fill="#fff" stroke="#456" /><path d="M7 7h4v4H7z" fill="#6f9be0" /><path d="M2 1h12" stroke="#456" stroke-dasharray="1 1" /></svg>
              格式 <svg class="w-1.5 h-1 ml-0.5 shrink-0 text-[#5678ac]"><use href="#dn" /></svg>
            </button>
          </div>
          <div class="h-[19px] leading-[19px] pl-[15px] whitespace-nowrap bg-[#c1d8f1] text-[#3e6aaa]">单元格</div>
        </div>
      </div>

      <div class="h-[21px] shrink-0 mt-0.5 ml-1 flex items-center border-y border-[#6f94c4] bg-white text-black font-['Liberation_Serif','Noto_Sans_CJK_SC',serif]">
        <input aria-label="名称框" value="D40" class="w-[140px] text-center text-base leading-[18px] outline-none" />
        <svg class="w-[7px] h-1 ml-1"><use href="#dn" /></svg>
        <div class="ml-2 w-[75px] h-full flex items-center justify-between pl-1 pr-1 rounded-l-full bg-[#c9ddf4] border border-[#8db2e3]">
          <span class="size-2 rounded-full bg-[#a9bcd4]"></span>
          <i class="font-bold text-sm text-[#444]">f<sub class="text-[9px]">x</sub></i>
        </div>
        <p class="pl-3 text-base leading-[18px] whitespace-nowrap">a、隔离盘直径(补偿后）,8mil(<span class="font-['Noto_Sans_CJK_SC']">≤</span>6层),10mil(<span class="font-['Noto_Sans_CJK_SC']">≥</span>8层)局部削盘可8mil</p>
      </div>

      <div class="flex-1 min-h-0 mt-0.5 ml-1 bg-white overflow-hidden text-black font-['Liberation_Serif','Noto_Sans_CJK_SC',serif]">
        <table class="table-fixed w-[841px] border-separate border-spacing-0 text-[13px] leading-4 whitespace-nowrap">
          <colgroup>
            <col class="w-[33px]" /><col class="w-[33px]" /><col class="w-[78px]" /><col class="w-[130px]" />
            <col class="w-[69px]" /><col class="w-[69px]" /><col class="w-[69px]" /><col class="w-[111px]" />
            <col class="w-[86px]" /><col class="w-[50px]" /><col class="w-[113px]" />
          </colgroup>
          <thead class="text-base leading-[18px] text-[#26354a]">
            <tr class="h-[19px] *:font-normal *:p-0 *:border-r *:border-b *:border-[#9eb6ce] bg-[#e4ecf7]">
              <th class="bg-[#a9c4e9]"><svg class="w-[30px] h-3"><path d="M28 2v10H17z" fill="#e4ecf7" /></svg></th>
              <th>A</th>
              <th>B</th>
              <th>C</th>
              <th class="bg-[#f5c97a] border-r-[#f29536]!">D</th>
              <th class="bg-[#f5c97a] border-r-[#f29536]!">E</th>
              <th class="bg-[#f5c97a] border-r-[#f29536]!">F</th>
              <th class="bg-[#f5c97a] border-r-[#f29536]!">G</th>
              <th>I</th>
              <th>J</th>
              <th>K</th>
            </tr>
          </thead>
          <tbody
            class="[&_th]:p-0 [&_th]:align-bottom [&_th]:font-normal [&_th]:text-base [&_th]:leading-[18px] [&_th]:text-[#26354a] [&_th]:border-r [&_th]:border-b [&_th]:border-[#9eb6ce] [&_td]:py-0 [&_td]:px-0.5 [&_td]:border-r [&_td]:border-b [&_td]:border-black"
          >
            <tr class="h-[33px]">
              <th class="bg-[#e4ecf7]">28</th>
              <td rowspan="15"></td>
              <td rowspan="4"></td>
              <td></td>
              <td colspan="4" class="text-[#e00000]">C.为了优化生产更改钻孔毛刺，规定内层制作见附图《<br />改善毛刺》中的制作方法</td>
              <td colspan="3" class="text-[#e00000]">注意：厚基铜的焊环要求超过8.5的客户<br />要求加大焊环</td>
            </tr>
            <tr class="h-[21px]">
              <th class="bg-[#e4ecf7]">29</th>
              <td rowspan="3">6）正片短路的检查</td>
              <td rowspan="3" colspan="4">a、在genesis中按右键<span class="font-['Noto_Sans_CJK_SC']">“</span>select affected board<span class="font-['Noto_Sans_CJK_SC']">”</span><br />选项检查顾客设计是否有开短路。如果整层都是一个网<br />络则属于电地短路</td>
              <td rowspan="3" colspan="3" class="text-center">\</td>
            </tr>
            <tr class="h-[21px]"><th class="bg-[#e4ecf7]">30</th></tr>
            <tr class="h-[21px]"><th class="bg-[#e4ecf7]">31</th></tr>
            <tr class="h-[21px]">
              <th class="bg-[#e4ecf7]">32</th>
              <td rowspan="11"></td>
              <td rowspan="4">1）隔离带、板边削铜</td>
              <td rowspan="2" colspan="4">a、隔离带宽<span class="font-['Noto_Sans_CJK_SC']">≥</span>8mil,不允许花焊盘中的孔搭在隔离带<br />上；对网络连接有影响时，需与顾客确认此处电气性能</td>
              <td rowspan="2" colspan="2"></td>
              <td rowspan="2"></td>
            </tr>
            <tr class="h-[36px]"><th class="bg-[#e4ecf7]">33</th></tr>
            <tr class="h-[72px]">
              <th class="bg-[#e4ecf7]">34</th>
              <td colspan="4">b、<span class="text-[#e00000]">IPC验收标准</span>的订单，板边削铜<span class="font-['Noto_Sans_CJK_SC']">≥</span>15mil，极限<br />10mil（注：对于板内铣槽也需按此处理）；<span class="text-[#e00000]">国军标和</span><br /><span class="text-[#e00000]">航天标准</span>的订单，内层外形削铜单边50mil，削到走线<br />或者金属孔焊环破孔时按照IPC验收标准削铜。</td>
              <td rowspan="2" colspan="2"></td>
              <td rowspan="2"></td>
            </tr>
            <tr class="h-[51px]">
              <th class="bg-[#e4ecf7]">35</th>
              <td colspan="4">c、客户设计隔离带与外形线重叠时，CAM人员需要通<br />过骨架模式判定网络属性;如附图D1B.</td>
            </tr>
            <tr class="h-[21px]">
              <th class="bg-[#e4ecf7]">36</th>
              <td rowspan="4">2）槽、NPTH孔（包<br />括铣孔）在负片层的<br />处理</td>
              <td rowspan="2" colspan="4">a.顾客设计非金属化孔或槽孔、方槽（外形）时，在负<br />片电、地层要设计隔离带或隔离盘(注意槽的隔离盘形<br />状、方向应与槽一致)</td>
              <td rowspan="4" colspan="3" class="text-center">\</td>
            </tr>
            <tr class="h-[41px]"><th class="bg-[#e4ecf7]">37</th></tr>
            <tr class="h-[34px]">
              <th class="bg-[#e4ecf7]">38</th>
              <td rowspan="2" colspan="4">b、为防止内槽或外形的拐角处在允许铣进附边的时候<br />出现露铜的情况，外形边框应多削一个铣刀位的铜，具<br />体见附图D3.</td>
            </tr>
            <tr class="h-[21px]"><th class="bg-[#e4ecf7]">39</th></tr>
            <tr class="h-[42px]">
              <th class="bg-[#ffd58d]">40</th>
              <td>3）隔离盘</td>
              <td colspan="4" class="outline-3 outline-double outline-black -outline-offset-2">a、隔离盘直径(补偿后）,8mil(<span class="font-['Noto_Sans_CJK_SC']">≤</span>6层),10mil(<span class="font-['Noto_Sans_CJK_SC']">≥</span>8<br />层)局部削盘可8mil</td>
              <td colspan="2"></td>
              <td></td>
            </tr>
            <tr class="h-[34px]">
              <th class="bg-[#e4ecf7]">41</th>
              <td rowspan="2" class="text-center align-bottom pb-1!">4）花焊盘</td>
              <td rowspan="2" colspan="4">a、花焊盘必须按照标准花焊盘</td>
              <td rowspan="2" colspan="3">ID<span class="font-['Noto_Sans_CJK_SC']">≥</span>钻孔孔径+10 mil时，则无须修改<br />果由于OD太大导致其它电气连接不好<br />可适当缩小OD尺寸，但必须保证OD<span class="font-['Noto_Sans_CJK_SC']">≥</span><br />孔径+8mil。</td>
            </tr>
            <tr class="h-[34px]"><th class="bg-[#e4ecf7]">42</th></tr>
          </tbody>
        </table>
      </div>
    </section>

    <!-- markup over the sheet -->
    <div class="absolute left-[1044px] top-[734px] w-[400px] h-[66px] border-[5px] border-[#1fe81f] shadow-[2px_3px_4px_#0008,inset_2px_2px_4px_#0008]"></div>
    <svg class="absolute left-[1296px] top-[757px] w-[34px] h-[45px]" viewBox="0 0 34 45">
      <path d="M2 43L10 25l-6 2L31 1l-5 27-6 0L6 44z" fill="#ff00ff" stroke="#ff00ff" />
    </svg>
    <div class="absolute left-[1243px] top-[807px] w-[203px] h-[50px] pl-1.5 bg-white shadow-[2px_2px_5px_#0009] text-[24px] leading-9 font-bold text-[#e80000] font-['Noto_Sans_CJK_SC']">隔离环不足</div>
    <div class="absolute left-[1376px] -top-[27px] size-[46px] pb-1 flex items-end justify-center rounded-full border-2 border-[#e8f4e8] bg-[#3cb84c] shadow-md text-white text-[12px] leading-[12px] font-bold font-['Noto_Sans']">73</div>

    <script>
      // p = plain pad, b / r = thermal with blue / red spokes; first column lies left of the view
      const rows = [
        "..p.ppp.p.ppp.pppp..",
        "..p.ppp.p.ppbpppppp.",
        "..p.ppp.p.bpp.pppp..",
        ".pp.ppb.p.ppp.ppppp.",
        ".pp.p.ppp.ppp.rppppp",
        "bpp..pppp.pbppp.p.p.",
        ".pp....bp.ppppp...pp",
        ".....b..p.pppp.r...p",
        ".bpp..p...ppp...p..p",
        "...p....pppp...pp.pp",
        "......p....p.ppp...p",
        ".ppp....p...p..p.pp.",
        ".pppp........ppppppp",
        ".pppp.ppr.prpppppppp",
        ".pprp.rrp.rprpr.p.pp",
        "...p...p..p...pr..p.",
        ".ppr...r..r...rpppp.",
        "rprprprp..prprprprpp",
        "..........r.......pp",
      ];
      document.getElementById("pads").innerHTML = rows
        .map((row, j) =>
          [...row]
            .map((c, i) =>
              c === "."
                ? ""
                : `<use href="#${c}" x="${149 + i * 33.73}" y="${155 + j * 33.72}" />`
            )
            .join("")
        )
        .join("");

      const tone = {
        w: "bg-white",
        g: "bg-[#00a77d]",
        c: "bg-[#9cdada]",
        s: "bg-[#ffc64c]",
        n: "bg-[#d9a900]",
        d: "bg-[#9ab3bd]",
        r: "bg-[#dddadd]",
      };
      // name, tone, mark, dot
      const groups = [
        [["to", "w", "hand"], ["ts", "g", "hand"]],
        [["cs.etch", "c"]],
        [["cs", "s"], ["pln2t", "n"]],
        [["pln3b", "c"]],
        [["sig3b", "s"], ["pln4t", "n"]],
        [["pln5b", "c"]],
        [["sig5b", "s"], ["pln6t", "n"], ["pln7b", "n", "", "#f00"], ["pln8t", "n"], ["pln9b", "n", "", "#0020ff"]],
        [["pln10t", "c"]],
        [["sig10t", "s"], ["pln11b", "n"]],
        [["pln12t", "c"]],
        [["sig12t", "s"], ["pln13b", "n"]],
        [["ss.etch", "c"]],
        [["ss", "s"], ["bs", "g", "hand"], ["bo", "w", "hand"]],
        [["drl", "d", "gridmark", "#4a9a00"], ["2rd", "d"], ["ldi", "d"], ["rout", "r", "hand"]],
        [["cvia", "c"], ["tp", "c", "hand"], ["bp", "c", "hand"], ["dd", "c", "hand"], ["ddd", "c"]],
      ];
      document.getElementById("layers").innerHTML = groups
        .map(
          (g) =>
            `<div class="shrink-0 bg-black p-px pl-0.5">${g
              .map(
                ([name, t, mark, dot]) => `<label class="flex h-4 items-center">
                  <input type="checkbox" class="appearance-none size-[14px] shrink-0 outline-2 -outline-offset-4 outline-black ${name === "drl" ? "border-4 border-[#0a0a9a] bg-white" : "bg-white"}" />
                  <svg class="w-[18px] h-4 shrink-0">${dot ? `<circle cx="9" cy="8" r="6.500" fill="${dot}" />` : ""}</svg>
                  <span class="flex-1 h-[14px] pl-px pr-1 flex items-center justify-between leading-[14px] ${tone[t]}">${name}${
                    mark ? `<svg class="${mark === "hand" ? "w-2 h-2" : "w-1.5 h-1.5"}"><use href="#${mark}" /></svg>` : ""
                  }</span>
                </label>`
              )
              .join("")}</div>`
        )
        .join("");

      // name, outline, solid arrow
      const tools = [
        ["Pan up", "M10 10H6v13h17V10h-4", "M11 14V8H8l6.500-6L21 8h-3v6z"],
        ["Pan down", "M10 19H6V6h17v13h-4", "M11 15v6H8l6.500 6 6.500-6h-3v-6z"],
        ["Home", "M3 15L14 4l12 11M7 13v13h16V13M14 26v-9h5v9M9 16h3v3H9zM21 9l3-5"],
        ["Zoom area", "M3 3h24v23H3zM15 3v23M3 19h24M19 15l3 3"],
        ["Pan left", "M8 12V7h16v14H8", "M12 11v6H8v3l-6-6 6-6v3z"],
        ["Pan right", "M20 12V7H5v14h15", "M17 11v6h4v3l6-6-6-6v3z"],
        ["Previous", "M13 9h12v13H13zM5 10q0 7 6 7", "M1 12l4-6 4 6z"],
        ["Window", "M5 9h20v14H5zM20 9l7-5"],
      ];
      document.getElementById("tools").innerHTML = tools
        .map(
          ([name, d, solid]) => `<button aria-label="${name}" class="h-[38px] p-[3px] bg-[#9cdada] border-2 border-t-[#d0f5f2] border-l-[#d0f5f2] border-[#4d8f8a]">
            <svg class="w-full h-7 border border-black" viewBox="0 0 29 29"><path d="${d}" fill="none" stroke="#000" stroke-width="${solid ? 2 : 1.5}" />${solid ? `<path d="${solid}" />` : ""}</svg>
          </button>`
        )
        .join("");

      const button = ([icon, text, active]) =>
        `<button class="h-[22px] min-w-0 pl-1 flex items-center gap-1 overflow-hidden border ${
          active
            ? "bg-white font-bold border-t-[#404040] border-l-[#404040] border-white"
            : "border-t-white border-l-white border-[#404040]"
        } ${/HX00QA0|HYCAM|Comma|Toolki|9\.0|Guide/.test(text) ? "text-[11px]" : "text-xs"}"><svg class="size-4 shrink-0"><use href="#${icon}" /></svg>${text}</button>`;
      document.getElementById("tasks1").innerHTML = [
        ["calc", "计算器"],
        ["star", "兴森快捷衡阳..."],
        ["disk", "[2] Total Comma..."],
        ["pee", "工程系统&nbsp; 版本..."],
        ["doc", "制作规范 (Ver:1..."],
        ["xls", "EB4HX00QA0-预..."],
        ["xls", "EB4HX00QA0制..."],
        ["xls", "Q1EB4HX00QA0(..."],
        ["xls", "CAM制作规范....", true],
        ["word", "EB4HX00QA0-阻..."],
      ].map(button).join("");
      document.getElementById("tasks2").innerHTML = [
        ["viewer", "HY-HYCAM-PC040..."],
        ["eye", "get.exe"],
        ["xwin", "Engineering Toolki..."],
        ["xwin", "Progress"],
        ["xwin", "Dialog Box"],
        ["xwin", "Graphic Editor 9.0..."],
        ["eye", "CAM_Guide v2.68"],
        ["feiq", "赵成捷"],
        ["feiq", "周丹"],
        ["note", "eb4hx00qa0.txt -..."],
      ].map(button).join("");
    </script>
  </body>
</html>
